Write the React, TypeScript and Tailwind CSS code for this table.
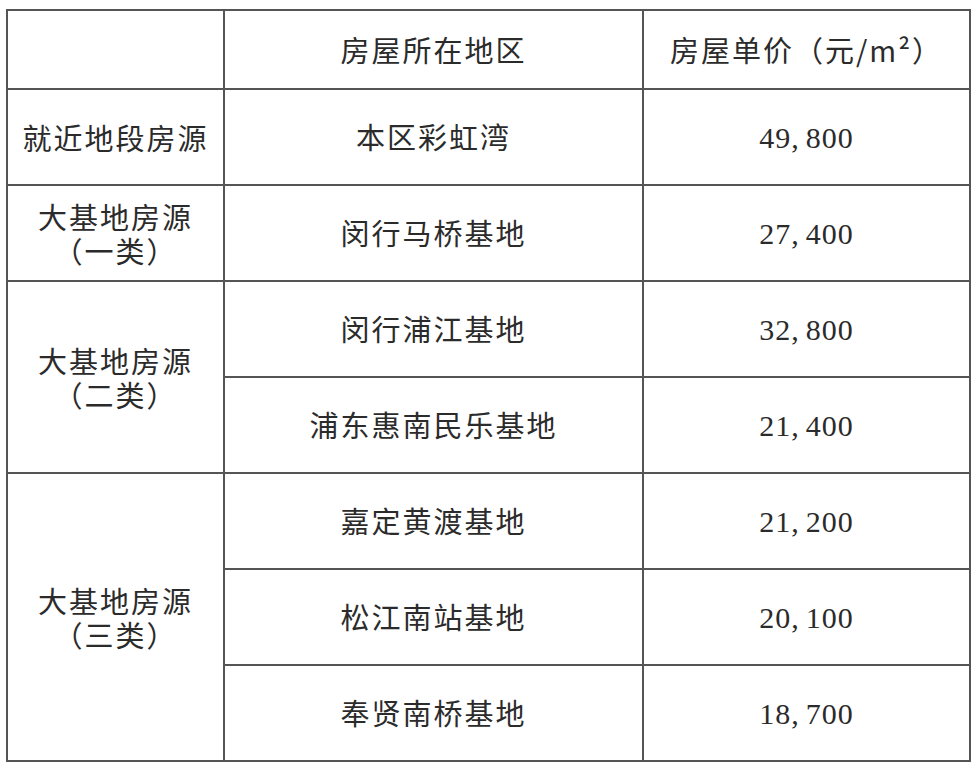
import React from "react";

type Row = {
  group?: { lines: string[]; span: number };
  area: string;
  price: string;
};

const rows: Row[] = [
  { group: { lines: ["就近地段房源"], span: 1 }, area: "本区彩虹湾", price: "49,800" },
  { group: { lines: ["大基地房源", "（一类）"], span: 1 }, area: "闵行马桥基地", price: "27,400" },
  { group: { lines: ["大基地房源", "（二类）"], span: 2 }, area: "闵行浦江基地", price: "32,800" },
  { area: "浦东惠南民乐基地", price: "21,400" },
  { group: { lines: ["大基地房源", "（三类）"], span: 3 }, area: "嘉定黄渡基地", price: "21,200" },
  { area: "松江南站基地", price: "20,100" },
  { area: "奉贤南桥基地", price: "18,700" },
];

const cjk = "font-['Noto_Sans_CJK_SC',sans-serif] text-[29px] tracking-[2px] text-[#2b2b2b]";
const cell = "border-2 border-[#555] text-center align-middle p-0";

function Price({ value }: { value: string }) {
  const [a, b] = value.split(",");
  return (
    <span className="font-['Liberation_Serif','Noto_Sans_CJK_SC',serif] text-[30px] tracking-[1px] text-[#2b2b2b]">
      {a}
      <span className="mr-[6px]">,</span>
      {b}
    </span>
  );
}

export default function App() {
  return (
    <div className="w-[976px] h-[770px] bg-white overflow-hidden">
      <table className="ml-[6px] mt-[9px] w-[963px] border-collapse table-fixed">
        <colgroup>
          <col className="w-[217px]" />
          <col className="w-[419px]" />
          <col className="w-[327px]" />
        </colgroup>
        <thead>
          <tr className="h-[79px]">
            <th className={cell}></th>
            <th className={`${cell} ${cjk} font-normal`}>房屋所在地区</th>
            <th className={`${cell} ${cjk} font-normal`}>房屋单价（元/m²）</th>
          </tr>
        </thead>
        <tbody>
          {rows.map((r, i) => (
            <tr key={i} className="h-[96px]">
              {r.group && (
                <td rowSpan={r.group.span} className={`${cell} ${cjk} leading-[34px]`}>
                  {r.group.lines.map((l, j) => (
                    <React.Fragment key={j}>
                      {j > 0 && <br />}
                      {l}
                    </React.Fragment>
                  ))}
                </td>
              )}
              <td className={`${cell} ${cjk}`}>{r.area}</td>
              <td className={cell}>
                <Price value={r.price} />
              </td>
            </tr>
          ))}
        </tbody>
      </table>
    </div>
  );
}
